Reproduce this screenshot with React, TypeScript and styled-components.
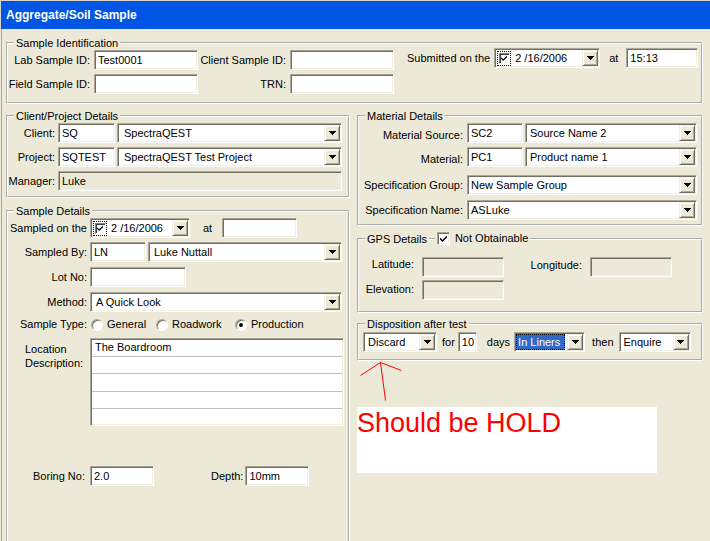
import React from "react";
import styled, { createGlobalStyle, css } from "styled-components";

const FONT = `"Liberation Sans", Arial, sans-serif`;

const GlobalStyle = createGlobalStyle`
  html, body { margin: 0; padding: 0; background: #ece9d8; }
  body { font-family: ${FONT}; font-size: 11px; color: #000; }
  *, *::before, *::after { box-sizing: border-box; }
`;

const sunken = css`
  border: 1px solid;
  border-color: #aca899 #fff #fff #aca899;
  box-shadow: inset 1px 1px 0 #716f64, inset -1px -1px 0 #f1efe2;
`;

const raised = css`
  border: 1px solid;
  border-color: #f1efe2 #716f64 #716f64 #f1efe2;
  box-shadow: inset 1px 1px 0 #fff, inset -1px -1px 0 #aca899;
  background: #ece9d8;
`;

const Window = styled.div`
  width: 710px;
  height: 541px;
  overflow: hidden;
  background: #ece9d8;
  display: flex;
  flex-direction: column;
`;

const TitleBar = styled.div`
  flex: none;
  height: 29px;
  border-top: 1px solid #d8d5cb;
  border-left: 1px solid #d8d5cb;
  padding: 1px 0 0 5px;
  background: #0055e5;
  color: #fff;
  font: bold 12px/27px ${FONT};
`;

const Body = styled.div`
  flex: 1;
  min-height: 0;
  margin-left: 1px;
  border-left: 1px solid #aca899;
  padding: 8px 7px 0 4px;
  display: flex;
  flex-direction: column;
  gap: 6px;
`;

const Group = styled.fieldset<{ $pt: number; $pb: number; $mt?: number }>`
  margin: ${(p) => p.$mt ?? 0}px 0 0;
  min-width: 0;
  padding: ${(p) => p.$pt}px 0 ${(p) => p.$pb}px;
  border: 2px groove #fff;
`;

const Legend = styled.legend`
  margin-left: 6px;
  padding: 0 2px;
  font: 11px/12px ${FONT};
  display: flex;
  align-items: center;
`;

const Label = styled.span<{ $ml?: number }>`
  flex: none;
  white-space: nowrap;
  font: 11px/13px ${FONT};
  margin-left: ${(p) => p.$ml ?? 0}px;
`;

const RLabel = styled.span<{ $pr?: number; $pt?: number }>`
  justify-self: end;
  white-space: nowrap;
  font: 11px/13px ${FONT};
  padding-right: ${(p) => p.$pr ?? 0}px;
  padding-top: ${(p) => p.$pt ?? 0}px;
`;

const Field = styled.div<{ $w: number; $disabled?: boolean; $span?: boolean; $ml?: number }>`
  ${sunken};
  flex: none;
  width: ${(p) => p.$w}px;
  height: 20px;
  margin-left: ${(p) => p.$ml ?? 0}px;
  background: ${(p) => (p.$disabled ? "#ece9d8" : "#fff")};
  padding: 0 3px;
  font: 11px/18px ${FONT};
  white-space: nowrap;
  overflow: hidden;
  ${(p) => p.$span && "grid-column: span 2;"}
`;

const ComboBox = styled.div<{ $w: number; $ml?: number }>`
  ${sunken};
  flex: none;
  width: ${(p) => p.$w}px;
  height: 20px;
  margin-left: ${(p) => p.$ml ?? 0}px;
  background: #fff;
  padding: 1px;
  display: flex;
  align-items: center;
`;

const ComboValue = styled.div<{ $selected?: boolean; $pad?: number }>`
  flex: 1;
  min-width: 0;
  align-self: stretch;
  padding-left: ${(p) => p.$pad ?? 3}px;
  font: 11px/16px ${FONT};
  white-space: nowrap;
  overflow: hidden;
  ${(p) =>
    p.$selected &&
    css`
      background: #316ac5;
      color: #fff;
      outline: 1px dotted #000;
      outline-offset: -1px;
      margin-right: 2px;
      padding-left: 2px;
    `}
`;

const DropBtn = styled.div`
  ${raised};
  flex: none;
  align-self: stretch;
  width: 16px;
  display: flex;
  align-items: center;
  justify-content: center;
`;

const ArrowIcon = () => (
  <svg width="7" height="4" viewBox="0 0 7 4" shapeRendering="crispEdges">
    <path d="M0 0H7V1H6V2H5V3H4V4H3V3H2V2H1V1H0Z" fill="#000" />
  </svg>
);

const CheckIcon = ({ size = 7 }: { size?: number }) => (
  <svg width={size} height={size} viewBox="0 0 7 7">
    <path d="M0 2.5L2.5 5L7 0.5V2.5L2.5 7L0 4.5Z" fill="#000" />
  </svg>
);

function Combo(props: { w: number; value?: string; pad?: number; ml?: number; selected?: boolean }) {
  return (
    <ComboBox $w={props.w} $ml={props.ml}>
      <ComboValue $pad={props.pad} $selected={props.selected}>
        {props.value}
      </ComboValue>
      <DropBtn>
        <ArrowIcon />
      </DropBtn>
    </ComboBox>
  );
}

const FocusRing = styled.span`
  flex: none;
  width: 14px;
  height: 15px;
  margin-left: 1px;
  border: 1px dotted #000;
  display: flex;
  align-items: center;
  justify-content: center;
`;

const SmallCheck = styled.span`
  width: 11px;
  height: 11px;
  background: #fff;
  border: 1px solid;
  border-color: #808080 #fff #fff #808080;
  box-shadow: inset 1px 1px 0 #404040;
  display: flex;
  align-items: center;
  justify-content: center;
`;

const DateText = styled.span`
  flex: 1;
  padding-left: 4px;
  font: 11px/16px ${FONT};
  white-space: nowrap;
`;

function DatePicker(props: { w: number; value: string }) {
  return (
    <ComboBox $w={props.w}>
      <FocusRing>
        <SmallCheck>
          <CheckIcon size={6} />
        </SmallCheck>
      </FocusRing>
      <DateText>{props.value}</DateText>
      <DropBtn>
        <ArrowIcon />
      </DropBtn>
    </ComboBox>
  );
}

/* ---------- Sample Identification ---------- */
const IdRow = styled.div`
  display: flex;
  align-items: flex-start;
`;

const IdGrid = styled.div`
  display: grid;
  grid-template-columns: 82px 104px 84px 104px;
  column-gap: 4px;
  row-gap: 4px;
  align-items: center;
`;

const Submitted = styled.div`
  display: flex;
  align-items: center;
  margin: -2px 0 0 13px;
`;

/* ---------- Columns ---------- */
const Columns = styled.div`
  display: grid;
  grid-template-columns: 344px 346px;
  column-gap: 7px;
  align-items: start;
`;

const Column = styled.div`
  display: flex;
  flex-direction: column;
`;

const ClientGrid = styled.div`
  display: grid;
  grid-template-columns: 48px 57px 225px;
  column-gap: 2px;
  row-gap: 4px;
  align-items: center;
`;

const SRow = styled.div<{ $mt?: number; $top?: boolean }>`
  display: grid;
  grid-template-columns: 79px 1fr;
  column-gap: 3px;
  align-items: ${(p) => (p.$top ? "start" : "center")};
  margin-top: ${(p) => p.$mt ?? 0}px;
`;

const Inline = styled.div`
  display: flex;
  align-items: center;
`;

const RadioOption = styled.span<{ $w?: number }>`
  flex: none;
  display: flex;
  align-items: center;
  gap: 4px;
  width: ${(p) => (p.$w ? `${p.$w}px` : "auto")};
  font: 11px/13px ${FONT};
`;

const RadioDot = styled.span<{ $on?: boolean }>`
  flex: none;
  width: 12px;
  height: 12px;
  margin-left: 1px;
  border-radius: 50%;
  background: #fff;
  border: 1px solid;
  border-color: #aca899 #fff #fff #aca899;
  box-shadow: inset 1px 1px 0 #716f64;
  display: flex;
  align-items: center;
  justify-content: center;
  &::after {
    content: "";
    width: 4px;
    height: 4px;
    border-radius: 50%;
    background: ${(p) => (p.$on ? "#000" : "transparent")};
  }
`;

const LocLabel = styled.span`
  padding: 4px 0 0 17px;
  font: 11px/14px ${FONT};
`;

const TextArea = styled.div`
  ${sunken};
  width: 254px;
  height: 88px;
  background: #fff;
  padding: 0 1px;
  display: flex;
  flex-direction: column;
`;

const TextLine = styled.div<{ $h: number; $last?: boolean }>`
  flex: none;
  height: ${(p) => p.$h}px;
  border-bottom: ${(p) => (p.$last ? "none" : "1px solid #c0c0c0")};
  padding-left: 3px;
  font: 11px/${(p) => p.$h - 1}px ${FONT};
  white-space: nowrap;
`;

/* ---------- Right column ---------- */
const MRow = styled.div<{ $mt?: number }>`
  display: flex;
  align-items: center;
  margin-top: ${(p) => p.$mt ?? 0}px;
`;

const MLabel = styled.span<{ $pt?: number }>`
  flex: none;
  width: 104px;
  margin-right: 4px;
  text-align: right;
  white-space: nowrap;
  font: 11px/13px ${FONT};
  padding-top: ${(p) => p.$pt ?? 0}px;
`;

const GpsGrid = styled.div`
  display: grid;
  grid-template-columns: 63px 82px 86px 82px;
  row-gap: 3px;
  align-items: start;
`;

const GpsLabel = styled.span<{ $mt?: number }>`
  justify-self: end;
  padding-right: 8px;
  margin-top: ${(p) => p.$mt ?? 0}px;
  white-space: nowrap;
  font: 11px/13px ${FONT};
`;

const LegendGap = styled.span`
  flex: none;
  width: 6px;
  height: 2px;
  margin-left: 2px;
  border-top: 1px solid #ababab;
  border-bottom: 1px solid #fff;
`;

const Check13 = styled.span`
  flex: none;
  width: 13px;
  height: 13px;
  margin-left: 2px;
  background: #fff;
  border: 1px solid;
  border-color: #aca899 #fff #fff #aca899;
  box-shadow: inset 1px 1px 0 #716f64, inset -1px -1px 0 #f1efe2;
  display: flex;
  align-items: center;
  justify-content: center;
`;

const DispRow = styled.div`
  display: flex;
  align-items: center;
  padding-left: 4px;
`;

const ArrowSvg = styled.svg`
  display: block;
  flex: none;
`;

const Note = styled.div`
  width: 300px;
  height: 66px;
  background: #fff;
  color: #ff0000;
  padding-top: 3px;
  font: 27px/27px ${FONT};
  white-space: nowrap;
`;

export default function App() {
  return (
    <>
      <GlobalStyle />
      <Window>
        <TitleBar>Aggregate/Soil Sample</TitleBar>
        <Body>
          <Group $pt={1} $pb={8}>
            <Legend>Sample Identification</Legend>
            <IdRow>
              <IdGrid>
                <RLabel>Lab Sample ID:</RLabel>
                <Field $w={104}>Test0001</Field>
                <RLabel>Client Sample ID:</RLabel>
                <Field $w={104} />
                <RLabel>Field Sample ID:</RLabel>
                <Field $w={104} />
                <RLabel>TRN:</RLabel>
                <Field $w={104} />
              </IdGrid>
              <Submitted>
                <Label>Submitted on the</Label>
                <Label $ml={4} />
                <DatePicker w={106} value="2 /16/2006" />
                <Label $ml={9}>at</Label>
                <Field $w={72} $ml={8}>
                  15:13
                </Field>
              </Submitted>
            </IdRow>
          </Group>

          <Columns>
            <Column>
              <Group $pt={1} $pb={5}>
                <Legend>Client/Project Details</Legend>
                <ClientGrid>
                  <RLabel $pr={1}>Client:</RLabel>
                  <Field $w={57}>SQ</Field>
                  <Combo w={225} value="SpectraQEST" pad={5} />
                  <RLabel $pr={1}>Project:</RLabel>
                  <Field $w={57}>SQTEST</Field>
                  <Combo w={225} value="SpectraQEST Test Project" pad={5} />
                  <RLabel $pr={1}>Manager:</RLabel>
                  <Field $w={284} $disabled $span>
                    Luke
                  </Field>
                </ClientGrid>
              </Group>

              <Group $mt={7} $pt={1} $pb={80}>
                <Legend>Sample Details</Legend>
                <SRow>
                  <RLabel>Sampled on the</RLabel>
                  <Inline>
                    <DatePicker w={100} value="2 /16/2006" />
                    <Label $ml={13}>at</Label>
                    <Field $w={75} $ml={10} />
                  </Inline>
                </SRow>
                <SRow $mt={4}>
                  <RLabel>Sampled By:</RLabel>
                  <Inline>
                    <Field $w={56}>LN</Field>
                    <Combo w={194} ml={2} value="Luke Nuttall" pad={4} />
                  </Inline>
                </SRow>
                <SRow $mt={5}>
                  <RLabel>Lot No:</RLabel>
                  <Inline>
                    <Field $w={96} />
                  </Inline>
                </SRow>
                <SRow $mt={5}>
                  <RLabel>Method:</RLabel>
                  <Inline>
                    <Combo w={252} value="A Quick Look" pad={4} />
                  </Inline>
                </SRow>
                <SRow $mt={6}>
                  <RLabel>Sample Type:</RLabel>
                  <Inline>
                    <RadioOption $w={65}>
                      <RadioDot />
                      General
                    </RadioOption>
                    <RadioOption $w={79}>
                      <RadioDot />
                      Roadwork
                    </RadioOption>
                    <RadioOption>
                      <RadioDot $on />
                      Production
                    </RadioOption>
                  </Inline>
                </SRow>
                <SRow $mt={7} $top>
                  <LocLabel>
                    Location
                    <br />
                    Description:
                  </LocLabel>
                  <TextArea>
                    <TextLine $h={18}>The Boardroom</TextLine>
                    <TextLine $h={17} />
                    <TextLine $h={18} />
                    <TextLine $h={17} />
                    <TextLine $h={16} $last />
                  </TextArea>
                </SRow>
                <SRow $mt={40}>
                  <RLabel $pr={2}>Boring No:</RLabel>
                  <Inline>
                    <Field $w={64}>2.0</Field>
                    <Label $ml={57}>Depth:</Label>
                    <Field $w={64} $ml={2}>
                      10mm
                    </Field>
                  </Inline>
                </SRow>
              </Group>
            </Column>

            <Column>
              <Group $pt={1} $pb={4}>
                <Legend>Material Details</Legend>
                <MRow>
                  <MLabel $pt={5}>Material Source:</MLabel>
                  <Field $w={56}>SC2</Field>
                  <Combo w={172} ml={2} value="Source Name 2" />
                </MRow>
                <MRow $mt={4}>
                  <MLabel $pt={5}>Material:</MLabel>
                  <Field $w={56}>PC1</Field>
                  <Combo w={172} ml={2} value="Product name 1" />
                </MRow>
                <MRow $mt={8}>
                  <MLabel>Specification Group:</MLabel>
                  <Combo w={230} value="New Sample Group" pad={2} />
                </MRow>
                <MRow $mt={5}>
                  <MLabel>Specification Name:</MLabel>
                  <Combo w={230} value="ASLuke" pad={2} />
                </MRow>
              </Group>

              <Group $mt={6} $pt={12} $pb={11}>
                <Legend>
                  GPS Details
                  <LegendGap />
                  <Check13>
                    <CheckIcon size={7} />
                  </Check13>
                  <Label $ml={5}>Not Obtainable</Label>
                </Legend>
                <GpsGrid>
                  <GpsLabel $mt={1}>Latitude:</GpsLabel>
                  <Field $w={82} $disabled />
                  <GpsLabel $mt={2}>Longitude:</GpsLabel>
                  <Field $w={82} $disabled />
                  <GpsLabel $mt={3}>Elevation:</GpsLabel>
                  <Field $w={82} $disabled />
                </GpsGrid>
              </Group>

              <Group $mt={5} $pt={2} $pb={7}>
                <Legend>Disposition after test</Legend>
                <DispRow>
                  <Combo w={74} value="Discard" pad={3} />
                  <Label $ml={5}>for</Label>
                  <Field $w={19} $ml={3}>
                    10
                  </Field>
                  <Label $ml={10}>days</Label>
                  <Combo w={71} ml={4} value="In Liners" selected />
                  <Label $ml={7}>then</Label>
                  <Combo w={72} ml={5} value="Enquire" pad={3} />
                </DispRow>
              </Group>

              <ArrowSvg width="60" height="46" viewBox="0 0 60 46">
                <path
                  d="M23.5 1.5L3.5 14.5M23.5 1.5L44.5 9.5M23.5 1.5L28.5 39.5"
                  stroke="#ff0000"
                  strokeWidth="1"
                  fill="none"
                />
              </ArrowSvg>
              <Note>Should be HOLD</Note>
            </Column>
          </Columns>
        </Body>
      </Window>
    </>
  );
}
